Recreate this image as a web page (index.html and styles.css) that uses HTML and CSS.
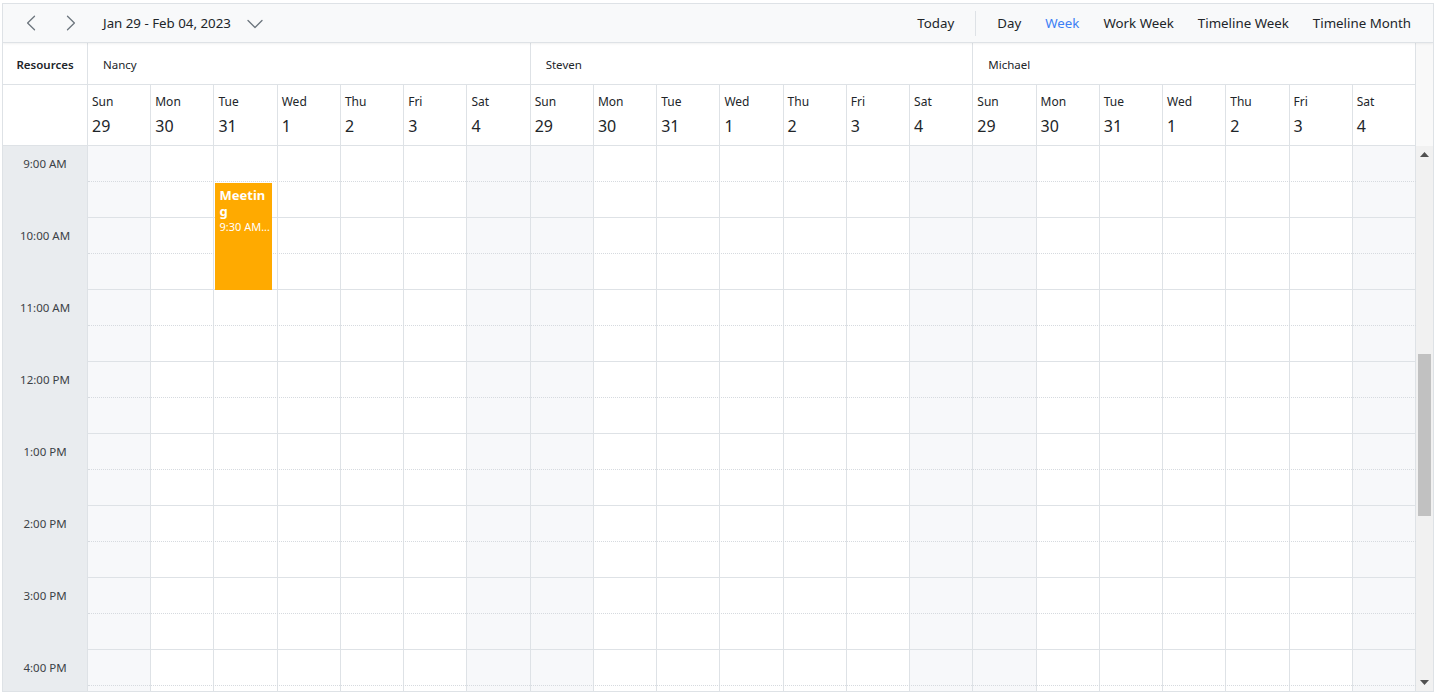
FILE: index.html
```html
<!DOCTYPE html>
<html>
<head>
<meta charset="utf-8">
<title>Scheduler</title>
<link rel="stylesheet" href="styles.css">
</head>
<body>
<div class="scheduler">
  <div class="toolbar">
    <div class="tb-left">
      <button class="icon-btn" aria-label="Previous"><svg width="10" height="16" viewBox="0 0 10 16"><path d="M8.5 1.2 L1.6 8 L8.5 14.8"/></svg></button>
      <button class="icon-btn next" aria-label="Next"><svg width="10" height="16" viewBox="0 0 10 16"><path d="M1.5 1.2 L8.4 8 L1.5 14.8"/></svg></button>
      <button class="date-btn"><span>Jan 29 - Feb 04, 2023</span><svg width="16" height="10" viewBox="0 0 16 10"><path d="M1 1.5 L8 8.5 L15 1.5"/></svg></button>
    </div>
    <div class="tb-right">
      <button class="tb-item">Today</button>
      <span class="tb-sep"></span>
      <button class="tb-item">Day</button>
      <button class="tb-item active">Week</button>
      <button class="tb-item">Work Week</button>
      <button class="tb-item">Timeline Week</button>
      <button class="tb-item">Timeline Month</button>
    </div>
  </div>

  <div class="header">
    <div class="res-label">Resources</div>
    <div class="res-cell">Nancy</div>
    <div class="res-cell">Steven</div>
    <div class="res-cell">Michael</div>
    <div class="hdr-spacer"></div>
    <div class="corner"></div>
    <div class="date-cell"><div class="dname">Sun</div><div class="dnum">29</div></div>
    <div class="date-cell"><div class="dname">Mon</div><div class="dnum">30</div></div>
    <div class="date-cell"><div class="dname">Tue</div><div class="dnum">31</div></div>
    <div class="date-cell"><div class="dname">Wed</div><div class="dnum">1</div></div>
    <div class="date-cell"><div class="dname">Thu</div><div class="dnum">2</div></div>
    <div class="date-cell"><div class="dname">Fri</div><div class="dnum">3</div></div>
    <div class="date-cell"><div class="dname">Sat</div><div class="dnum">4</div></div>
    <div class="date-cell"><div class="dname">Sun</div><div class="dnum">29</div></div>
    <div class="date-cell"><div class="dname">Mon</div><div class="dnum">30</div></div>
    <div class="date-cell"><div class="dname">Tue</div><div class="dnum">31</div></div>
    <div class="date-cell"><div class="dname">Wed</div><div class="dnum">1</div></div>
    <div class="date-cell"><div class="dname">Thu</div><div class="dnum">2</div></div>
    <div class="date-cell"><div class="dname">Fri</div><div class="dnum">3</div></div>
    <div class="date-cell"><div class="dname">Sat</div><div class="dnum">4</div></div>
    <div class="date-cell"><div class="dname">Sun</div><div class="dnum">29</div></div>
    <div class="date-cell"><div class="dname">Mon</div><div class="dnum">30</div></div>
    <div class="date-cell"><div class="dname">Tue</div><div class="dnum">31</div></div>
    <div class="date-cell"><div class="dname">Wed</div><div class="dnum">1</div></div>
    <div class="date-cell"><div class="dname">Thu</div><div class="dnum">2</div></div>
    <div class="date-cell"><div class="dname">Fri</div><div class="dnum">3</div></div>
    <div class="date-cell"><div class="dname">Sat</div><div class="dnum">4</div></div>
  </div>

  <div class="content">
    <div class="time-col">
      <div class="time-slot"><span>9:00 AM</span></div>
      <div class="time-slot"><span>10:00 AM</span></div>
      <div class="time-slot"><span>11:00 AM</span></div>
      <div class="time-slot"><span>12:00 PM</span></div>
      <div class="time-slot"><span>1:00 PM</span></div>
      <div class="time-slot"><span>2:00 PM</span></div>
      <div class="time-slot"><span>3:00 PM</span></div>
      <div class="time-slot"><span>4:00 PM</span></div>
    </div>
    <div class="day-col weekend"></div>
    <div class="day-col"></div>
    <div class="day-col"></div>
    <div class="day-col"></div>
    <div class="day-col"></div>
    <div class="day-col"></div>
    <div class="day-col weekend"></div>
    <div class="day-col weekend"></div>
    <div class="day-col"></div>
    <div class="day-col"></div>
    <div class="day-col"></div>
    <div class="day-col"></div>
    <div class="day-col"></div>
    <div class="day-col weekend"></div>
    <div class="day-col weekend"></div>
    <div class="day-col"></div>
    <div class="day-col"></div>
    <div class="day-col"></div>
    <div class="day-col"></div>
    <div class="day-col"></div>
    <div class="day-col weekend"></div>
    <div class="scrollbar">
      <div class="sb-arrow"><svg width="9" height="5" viewBox="0 0 9 5"><polygon points="0,5 4.5,0 9,5"/></svg></div>
      <div class="sb-track"><div class="sb-thumb"></div></div>
      <div class="sb-arrow"><svg width="9" height="5" viewBox="0 0 9 5"><polygon points="0,0 9,0 4.5,5"/></svg></div>
    </div>

    <div class="lines">
      <div class="slot half"></div><div class="slot hour"></div>
      <div class="slot half"></div><div class="slot hour"></div>
      <div class="slot half"></div><div class="slot hour"></div>
      <div class="slot half"></div><div class="slot hour"></div>
      <div class="slot half"></div><div class="slot hour"></div>
      <div class="slot half"></div><div class="slot hour"></div>
      <div class="slot half"></div><div class="slot hour"></div>
      <div class="slot half"></div><div class="slot hour"></div>
    </div>

    <div class="event">
      <div class="ev-title">Meeting</div>
      <div class="ev-time">9:30 AM...</div>
    </div>
  </div>
</div>
</body>
</html>
```

FILE: styles.css
```css
* { box-sizing: border-box; }
html, body { margin: 0; background: #fff; }
body {
  font-family: "Noto Sans", "Open Sans", sans-serif;
  color: #212529;
}
button {
  font: inherit;
  color: inherit;
  background: transparent;
  border: none;
  padding: 0;
  margin: 0;
  cursor: pointer;
}

.scheduler {
  margin: 3px 0 0 2px;
  width: 1432px;
  height: 689px;
  border: 1px solid #dee2e6;
  display: flex;
  flex-direction: column;
  overflow: hidden;
}

/* toolbar */
.toolbar {
  flex: none;
  height: 39px;
  display: flex;
  align-items: center;
  justify-content: space-between;
  background: #f8f9fa;
  border-bottom: 1px solid #dee2e6;
  box-shadow: 0 1px 2px rgba(0, 0, 0, 0.06);
  position: relative;
  z-index: 2;
  font-size: 13.3px;
}
.tb-left {
  display: flex;
  align-items: center;
  padding-left: 9px;
}
.icon-btn {
  width: 38px;
  height: 30px;
  display: flex;
  align-items: center;
  justify-content: center;
}
.icon-btn.next { margin-left: 2px; }
.icon-btn svg path,
.date-btn svg path {
  fill: none;
  stroke: #6c757d;
  stroke-width: 1.3;
  stroke-linecap: round;
  stroke-linejoin: round;
}
.date-btn {
  margin-left: 1px;
  height: 30px;
  padding: 0 12px;
  display: flex;
  align-items: center;
  gap: 16px;
}
.date-btn svg { margin-top: 1px; }
.tb-right {
  display: flex;
  align-items: center;
  padding-right: 10px;
}
.tb-item {
  height: 30px;
  padding: 0 12px;
  color: #212529;
}
.tb-item.active { color: #3d7ff5; }
.tb-sep {
  width: 1px;
  height: 25px;
  background: #dee2e6;
  margin: 0 9px 0 9px;
}

/* header */
.header {
  flex: none;
  display: grid;
  grid-template-columns: 85px repeat(21, 1fr) 17px;
  grid-template-rows: 42px 61px;
}
.res-label {
  border-right: 1px solid #dee2e6;
  border-bottom: 1px solid #dee2e6;
  font-size: 11.5px;
  font-weight: 600;
  display: flex;
  align-items: center;
  justify-content: center;
  padding-top: 1px;
}
.res-cell {
  grid-column: span 7;
  border-right: 1px solid #dee2e6;
  border-bottom: 1px solid #dee2e6;
  font-size: 11.5px;
  display: flex;
  align-items: center;
  padding: 1px 0 0 15px;
}
.hdr-spacer {
  grid-column: 23;
  grid-row: 1 / 3;
  background: #f9f9f9;
}
.corner {
  border-right: 1px solid #dee2e6;
  border-bottom: 1px solid #dee2e6;
}
.date-cell {
  border-right: 1px solid #dee2e6;
  border-bottom: 1px solid #dee2e6;
  padding: 8px 0 0 4px;
  overflow: hidden;
  white-space: nowrap;
}
.dname {
  font-size: 12px;
  line-height: 18px;
}
.dnum {
  font-size: 16px;
  line-height: 24px;
  margin-top: 3px;
}

/* content */
.content {
  flex: none;
  height: 545px;
  display: grid;
  grid-template-columns: 85px repeat(21, 1fr) 17px;
  grid-template-rows: 545px;
  overflow: hidden;
  position: relative;
}
.time-col {
  background: #e9ecef;
  border-right: 1px solid #dee2e6;
  overflow: hidden;
}
.time-slot {
  height: 72px;
}
.time-slot span {
  display: block;
  height: 36px;
  line-height: 36px;
  text-align: center;
  font-size: 11.5px;
  color: #3c4247;
}
.day-col {
  border-right: 1px solid #dee2e6;
  background: #fff;
}
.day-col.weekend { background: #f7f8fa; }

.lines {
  position: absolute;
  grid-column: 2 / 23;
  grid-row: 1;
  top: 0;
  left: 0;
  right: 0;
  bottom: 0;
  display: flex;
  flex-direction: column;
  pointer-events: none;
  z-index: 1;
}
.slot {
  flex: none;
  height: 36px;
}
.slot.half { border-bottom: 1px dotted #d6dadf; }
.slot.hour { border-bottom: 1px solid #dee2e6; }

.event {
  position: absolute;
  grid-column: 4;
  grid-row: 1;
  top: 37px;
  left: 1px;
  width: 57px;
  height: 107px;
  background: #ffaa00;
  color: #fff;
  padding: 4px 4px 0 4px;
  z-index: 2;
  overflow: hidden;
}
.ev-title {
  font-size: 13px;
  font-weight: 700;
  line-height: 16px;
  word-break: break-all;
}
.ev-time {
  font-size: 11px;
  line-height: 16px;
  white-space: nowrap;
}

/* scrollbar */
.scrollbar {
  background: #f1f1f1;
  display: flex;
  flex-direction: column;
}
.sb-arrow {
  flex: none;
  height: 17px;
  display: flex;
  align-items: center;
  justify-content: center;
}
.sb-arrow svg polygon { fill: #505050; }
.sb-track {
  flex: 1;
  padding: 0 2px;
}
.sb-thumb {
  margin-top: 191px;
  height: 162px;
  background: #c1c1c1;
}
```
